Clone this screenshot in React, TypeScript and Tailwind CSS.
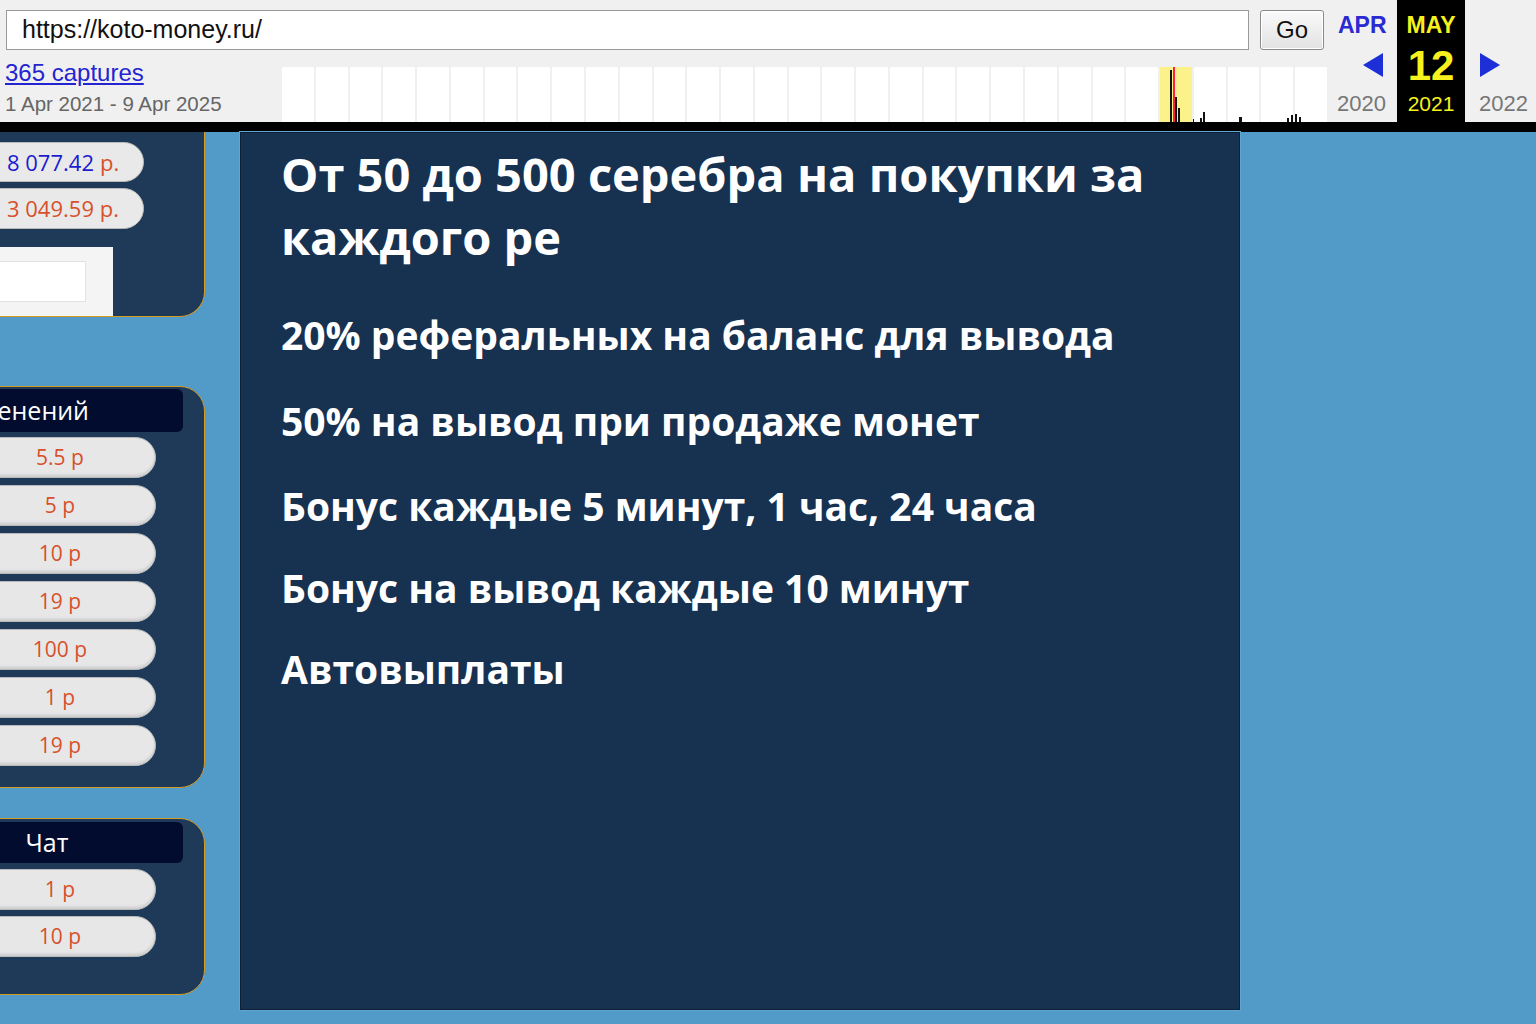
import React from 'react'

const tb = { fontFamily: '"Liberation Sans", Arial, sans-serif' }
const os = { fontFamily: '"Open Sans", "Noto Sans", sans-serif' }

function Sparkline() {
  const cols = Array.from({ length: 31 }, (_, i) => i)
  return (
    <div className="relative ml-[276px] w-[1045px] h-[55px] self-end">
      <div className="grid grid-cols-[repeat(31,1fr)] gap-x-[2px] h-full">
        {cols.map((i) => (
          <div key={i} className={i === 26 ? 'bg-[#fbf38a]' : 'bg-white'} />
        ))}
      </div>
      <svg className="absolute inset-0" width="1045" height="55" viewBox="0 0 1045 55">
        <rect x="888" y="3" width="2" height="52" fill="#111" />
        <rect x="891" y="0" width="2" height="55" fill="#ff1f4f" />
        <rect x="893" y="30" width="2" height="25" fill="#111" />
        <rect x="896" y="41" width="2" height="14" fill="#111" />
        <rect x="911" y="52" width="1" height="3" fill="#111" />
        <rect x="918" y="51" width="2" height="4" fill="#111" />
        <rect x="921" y="45" width="2" height="10" fill="#111" />
        <rect x="957" y="50" width="3" height="5" fill="#111" />
        <rect x="1005" y="51" width="2" height="4" fill="#111" />
        <rect x="1009" y="48" width="2" height="7" fill="#111" />
        <rect x="1013" y="47" width="2" height="8" fill="#111" />
        <rect x="1017" y="50" width="2" height="5" fill="#111" />
      </svg>
    </div>
  )
}

function Toolbar() {
  return (
    <div className="h-[132px] bg-[#f0f0f0] border-b-[10px] border-black flex" style={tb}>
      <div className="w-[1330px] flex flex-col">
        <div className="flex pt-[10px] pl-[6px] gap-[11px]">
          <div className="w-[1243px] h-[40px] bg-white border border-[#9a9a9a] flex items-center pl-[15px] text-[25px] text-[#111]">
            https://koto-money.ru/
          </div>
          <div className="w-[64px] h-[40px] border border-[#8a8a8a] rounded-[3px] bg-gradient-to-b from-[#fafafa] to-[#e2e2e2] shadow-[inset_0_0_0_1px_#fff] flex items-center justify-center text-[24px] text-[#111]">
            Go
          </div>
        </div>
        <div className="flex mt-[10px] h-[62px]">
          <div className="pl-[5px] w-[6px] shrink-0 whitespace-nowrap">
            <div className="text-[24px] leading-[26px] text-[#2424d0] underline">365 captures</div>
            <div className="text-[20.5px] leading-[24px] mt-[6px] text-[#666]">1 Apr 2021 - 9 Apr 2025</div>
          </div>
          <Sparkline />
        </div>
      </div>
      <div className="w-[67px] flex flex-col pt-[12px]">
        <div className="pl-[8px] text-[23px] leading-[26px] font-bold text-[#2a2ad2]">APR</div>
        <div className="h-[54px] flex items-center pl-[33px]">
          <svg width="20" height="24" viewBox="0 0 20 24">
            <polygon points="20,0 20,24 0,12" fill="#1e2fd8" />
          </svg>
        </div>
        <div className="pl-[7px] text-[22px] leading-[24px] text-[#777]">2020</div>
      </div>
      <div className="w-[68px] bg-black flex flex-col items-center pt-[12px] text-[#f7f21e]">
        <div className="text-[23px] leading-[26px] font-bold">MAY</div>
        <div className="h-[54px] flex items-center text-[42px] font-bold">12</div>
        <div className="text-[21px] leading-[24px]">2021</div>
      </div>
      <div className="w-[71px] flex flex-col pt-[12px]">
        <div className="h-[26px]" />
        <div className="h-[54px] flex items-center pl-[15px]">
          <svg width="20" height="24" viewBox="0 0 20 24">
            <polygon points="0,0 0,24 20,12" fill="#1e2fd8" />
          </svg>
        </div>
        <div className="pl-[14px] text-[22px] leading-[24px] text-[#777]">2022</div>
      </div>
    </div>
  )
}

function Pill({ children }: { children: React.ReactNode }) {
  return (
    <div
      className="h-[41px] ml-[3px] w-[192px] rounded-full bg-[#e7e7e7] border border-[#b9b9b9] shadow-[inset_0_-2px_3px_rgba(0,0,0,0.12)] flex items-center justify-center text-[21px] text-[#d6512c]"
      style={os}
    >
      {children}
    </div>
  )
}

function LeftColumn() {
  const rates = ['5.5 р', '5 р', '10 р', '19 р', '100 р', '1 р', '19 р']
  return (
    <div className="w-[240px] shrink-0 flex flex-col">
      {/* баланс */}
      <div className="-ml-[40px] w-[245px] h-[185px] bg-[#1f3a58] border-x border-b border-[#d39b22] rounded-br-[25px] flex flex-col pt-[10px] overflow-hidden">
        <div className="h-[40px] ml-[3px] w-[180px] rounded-full bg-[#e9e9e9] border border-[#b9b9b9] flex items-center pl-[42px] text-[22px]" style={os}>
          <span className="text-[#1c1cd0]">8 077.42</span>
          <span className="text-[#d6512c] ml-[6px]">р.</span>
        </div>
        <div className="h-[41px] mt-[6px] ml-[3px] w-[180px] rounded-full bg-[#e9e9e9] border border-[#b9b9b9] flex items-center pl-[42px] text-[22px] text-[#d6512c]" style={os}>
          3 049.59 р.
        </div>
        <div className="mt-auto w-[152px] h-[69px] bg-[#f4f4f4] pt-[14px]">
          <div className="w-[125px] h-[41px] bg-white border border-[#e2e2e2]" />
        </div>
      </div>

      {/* изменения */}
      <div className="-ml-[40px] mt-[69px] w-[245px] h-[402px] bg-[#1f3a58] border border-[#d39b22] rounded-r-[25px] pt-[2px] flex flex-col gap-[7px]">
        <div className="h-[43px] w-[222px] bg-[#020c2e] rounded-r-[6px] -mb-[2px] flex items-center">
          <div className="w-[128px] flex justify-end">
            <span className="shrink-0 whitespace-nowrap text-[25px] text-white" style={os}>
              Изменений
            </span>
          </div>
        </div>
        {rates.map((r, i) => (
          <Pill key={i}>{r}</Pill>
        ))}
      </div>

      {/* чат */}
      <div className="-ml-[40px] mt-[30px] w-[245px] h-[177px] bg-[#1f3a58] border border-[#d39b22] rounded-r-[25px] pt-[3px] flex flex-col gap-[6px]">
        <div className="h-[41px] w-[222px] bg-[#020c2e] rounded-r-[6px] flex items-center">
          <div className="w-[172px] text-center text-[25px] text-white" style={os}>
            Чат
          </div>
        </div>
        <Pill>1 р</Pill>
        <Pill>10 р</Pill>
      </div>
    </div>
  )
}

export default function App() {
  return (
    <div className="w-[1536px] h-[1024px] overflow-hidden bg-[#529ac8]">
      <Toolbar />
      <div className="flex">
        <LeftColumn />
        <div
          className="w-[1000px] h-[878px] bg-[#173150] border border-[#0e2036] shadow-[0_0_0_1px_#5fa5d2] pl-[40px] pr-[40px] pt-[10px] text-white font-bold"
          style={os}
        >
          <h1 className="text-[47px] leading-[63px]">От 50 до 500 серебра на покупки за каждого ре</h1>
          <p className="text-[39px] leading-[50px] mt-[41px]">20% реферальных на баланс для вывода</p>
          <p className="text-[39px] leading-[50px] mt-[36px]">50% на вывод при продаже монет</p>
          <p className="text-[39px] leading-[50px] mt-[35px]">Бонус каждые 5 минут, 1 час, 24 часа</p>
          <p className="text-[39px] leading-[50px] mt-[32px]">Бонус на вывод каждые 10 минут</p>
          <p className="text-[39px] leading-[50px] mt-[31px]">Автовыплаты</p>
        </div>
      </div>
    </div>
  )
}
